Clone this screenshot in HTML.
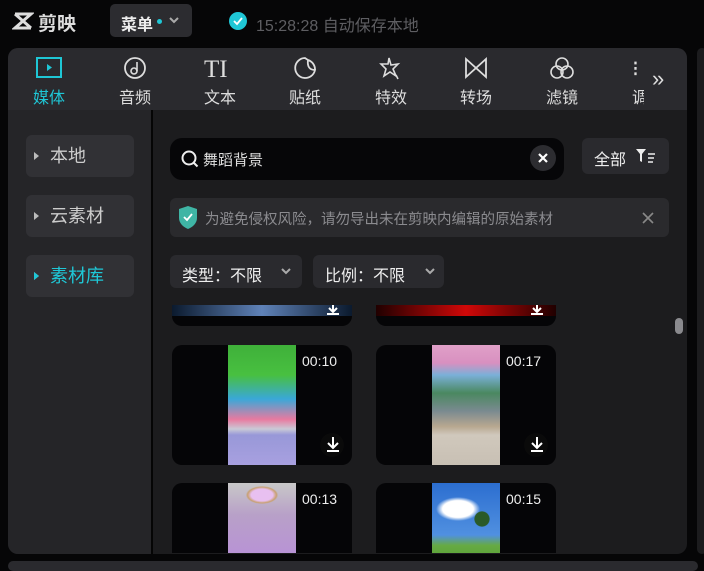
<!DOCTYPE html>
<html><head><meta charset="utf-8"><style>
*{margin:0;padding:0;box-sizing:border-box}
body{width:704px;height:569px;background:#060607;overflow:hidden;position:relative;font-family:"Liberation Sans","Noto Sans CJK SC",sans-serif;color:#ddd}
.a{position:absolute}
.tab{position:absolute;top:56px;width:60px;text-align:center;font-size:16px;color:#ddd}
.tab svg{display:block;margin:0 auto 4px}
.side{position:absolute;left:26px;width:108px;height:42px;background:#313135;border-radius:6px;font-size:18px;color:#ccc;line-height:42px;padding-left:24px}
.side:before{content:"";position:absolute;left:8px;top:17px;border-left:5px solid #bbb;border-top:4px solid transparent;border-bottom:4px solid transparent}
.card{position:absolute;width:180px;background:#050507;border-radius:10px;overflow:hidden}
.img{position:absolute;left:56px;top:0;width:68px;height:100%}
.dur{position:absolute;left:130px;top:8px;font-size:14px;color:#eee}
.dl{position:absolute;left:148px;width:24px;height:24px;border-radius:12px;background:#0a0a0a}
</style></head><body>
<svg class="a" style="left:12px;top:11px" width="22" height="20" viewBox="0 0 22 20"><path d="M3 3h16L3 17h16M3 3l16 14" stroke="#ddd" stroke-width="3" fill="none"/></svg>
<div class="a" style="left:38px;top:9px;font-size:19px;font-weight:bold;color:#ddd">剪映</div>
<div class="a" style="left:110px;top:4px;width:82px;height:33px;background:#2c2c30;border-radius:5px"></div>
<div class="a" style="left:121px;top:11px;font-size:16px;font-weight:bold;color:#eee">菜单</div>
<div class="a" style="left:157px;top:19px;width:5px;height:5px;border-radius:3px;background:#1fc7d6"></div>
<svg class="a" style="left:168px;top:15px" width="12" height="10"><path d="M2 3l4 4 4-4" stroke="#aaa" stroke-width="2" fill="none"/></svg>
<div class="a" style="left:229px;top:12px;width:18px;height:18px;border-radius:9px;background:#1fc7d6"></div>
<svg class="a" style="left:229px;top:12px" width="18" height="18"><path d="M5 9l3 3 5-6" stroke="#fff" stroke-width="1.8" fill="none"/></svg>
<div class="a" style="left:256px;top:12px;font-size:16px;color:#5e5e62">15:28:28 自动保存本地</div>
<div class="a" style="left:8px;top:48px;width:679px;height:506px;background:#1c1c1e;border-radius:10px;overflow:hidden">
 <div class="a" style="left:0;top:0;width:679px;height:62px;background:#2a2a2e"></div>
 <div class="a" style="left:0;top:62px;width:143px;height:450px;background:#252528"></div>
 <div class="a" style="left:143px;top:62px;width:2px;height:450px;background:#050505"></div>
</div>
<div class="a" style="left:697px;top:48px;width:10px;height:506px;background:#1c1c1e;border-radius:8px"></div>
<div class="a" style="left:8px;top:561px;width:690px;height:10px;background:#2a2a2e;border-radius:6px"></div>
<div class="tab" style="left:19px;color:#1fc7d6"><svg width="30" height="24"><rect x="3" y="2" width="24" height="19" stroke="#1fc7d6" stroke-width="2" fill="none"/><path d="M13 8v7l5-3.5z" fill="#1fc7d6"/></svg>媒体</div>
<div class="tab" style="left:105px"><svg width="30" height="24"><circle cx="15" cy="12" r="10" stroke="#ddd" stroke-width="1.8" fill="none"/><circle cx="14" cy="15" r="3" stroke="#ddd" stroke-width="1.6" fill="none"/><path d="M17 15V6" stroke="#ddd" stroke-width="1.6"/></svg>音频</div>
<div class="tab" style="left:190px"><svg width="36" height="24"><text x="2" y="21" font-family="Liberation Serif" font-size="25" fill="#ddd">TI</text></svg>文本</div>
<div class="tab" style="left:275px"><svg width="30" height="24"><path d="M15 2a10 10 0 1 0 10 12c-5 0-8-3-7-10z M18 4a10 10 0 0 1 7 10" stroke="#ddd" stroke-width="1.8" fill="none"/></svg>贴纸</div>
<div class="tab" style="left:361px"><svg width="30" height="24"><path d="M13 2l2 7 7-1-5 5 3 7-6-4-6 4 2-7-5-5 7 0z M20 19l2 4" stroke="#ddd" stroke-width="1.6" fill="none"/></svg>特效</div>
<div class="tab" style="left:446px"><svg width="30" height="24"><path d="M5 3v18l20-18v18z" stroke="#ddd" stroke-width="1.8" fill="none"/></svg>转场</div>
<div class="tab" style="left:532px"><svg width="30" height="24"><circle cx="15" cy="8" r="6" stroke="#ddd" stroke-width="1.6" fill="none"/><circle cx="10" cy="16" r="6" stroke="#ddd" stroke-width="1.6" fill="none"/><circle cx="20" cy="16" r="6" stroke="#ddd" stroke-width="1.6" fill="none"/></svg>滤镜</div>
<div class="a" style="left:632px;top:56px;width:12px;height:52px;overflow:hidden;font-size:16px;color:#ddd"><div style="height:28px;font-size:22px">⁝</div>调</div>
<div class="a" style="left:652px;top:66px;font-size:22px;color:#ddd">»</div>
<div class="side" style="top:135px">本地</div>
<div class="side" style="top:195px">云素材</div>
<div class="side" style="top:255px;color:#1fc7d6">素材库</div>
<div class="a" style="left:34px;top:272px;border-left:5px solid #1fc7d6;border-top:4px solid transparent;border-bottom:4px solid transparent"></div>
<div class="a" style="left:170px;top:138px;width:394px;height:42px;background:#060608;border-radius:12px"></div>
<svg class="a" style="left:180px;top:149px" width="20" height="20"><circle cx="9" cy="9" r="6.5" stroke="#eee" stroke-width="2" fill="none"/><path d="M13.5 13.5l4 4" stroke="#eee" stroke-width="2"/></svg>
<div class="a" style="left:203px;top:149px;font-size:15px;color:#ddd">舞蹈背景</div>
<div class="a" style="left:530px;top:145px;width:26px;height:26px;border-radius:13px;background:#2c2c30"></div>
<svg class="a" style="left:530px;top:145px" width="26" height="26"><path d="M9 9l8 8M17 9l-8 8" stroke="#fff" stroke-width="2.2"/></svg>
<div class="a" style="left:582px;top:138px;width:87px;height:36px;background:#2a2a2e;border-radius:6px"></div>
<div class="a" style="left:594px;top:146px;font-size:16px;color:#eee">全部</div>
<svg class="a" style="left:634px;top:147px" width="24" height="18"><path d="M2 2h10l-4 5v8l-2-1V7z" fill="#eee"/><path d="M14 7h7M14 11h6M14 15h5" stroke="#eee" stroke-width="1.5"/></svg>
<div class="a" style="left:170px;top:198px;width:499px;height:39px;background:#2a2a2d;border-radius:6px"></div>
<svg class="a" style="left:177px;top:205px" width="22" height="25"><path d="M11 1l9 3v9c0 5-4 9-9 11-5-2-9-6-9-11V4z" fill="#3fb5a5"/><path d="M7 12l3 3 5-6" stroke="#fff" stroke-width="1.8" fill="none"/></svg>
<div class="a" style="left:205px;top:208px;font-size:14.5px;color:#8b8b8f">为避免侵权风险，请勿导出未在剪映内编辑的原始素材</div>
<svg class="a" style="left:640px;top:210px" width="16" height="16"><path d="M3 3l10 10M13 3L3 13" stroke="#888" stroke-width="1.6"/></svg>
<div class="a" style="left:170px;top:255px;width:132px;height:33px;background:#2a2a2e;border-radius:6px"></div>
<div class="a" style="left:182px;top:262px;font-size:16px;color:#eee">类型：不限</div>
<svg class="a" style="left:280px;top:266px" width="12" height="10"><path d="M2 3l4 4 4-4" stroke="#aaa" stroke-width="2" fill="none"/></svg>
<div class="a" style="left:313px;top:255px;width:131px;height:33px;background:#2a2a2e;border-radius:6px"></div>
<div class="a" style="left:325px;top:262px;font-size:16px;color:#eee">比例：不限</div>
<svg class="a" style="left:424px;top:266px" width="12" height="10"><path d="M2 3l4 4 4-4" stroke="#aaa" stroke-width="2" fill="none"/></svg>
<div class="a" style="left:153px;top:305px;width:520px;height:248px;overflow:hidden">
 <div class="card" style="left:19px;top:-20px;height:41px"><div style="position:absolute;left:0;top:0;width:180px;height:31px;background:linear-gradient(90deg,#0b1a2e,#5f82b8 50%,#0b1a2e)"></div></div>
 <div class="card" style="left:223px;top:-20px;height:41px"><div style="position:absolute;left:0;top:0;width:180px;height:31px;background:linear-gradient(90deg,#200000,#d00808 50%,#200000)"></div></div>
 <div class="card" style="left:19px;top:40px;height:120px"><div class="img" style="background:linear-gradient(#3fb03a 0%,#48c040 25%,#3aa8d8 45%,#e87aa0 62%,#c9c9d6 70%,#9898d8 75%,#a8a0e0 100%)"></div><div class="dur">00:10</div><div class="dl" style="top:88px"></div></div>
 <div class="card" style="left:223px;top:40px;height:120px"><div class="img" style="background:linear-gradient(#e0a0c8 0%,#d890c0 15%,#7ab0d8 25%,#4a8860 40%,#7a8a90 55%,#b8a890 68%,#d0c8bc 75%,#c8c0b4 100%)"></div><div class="dur">00:17</div><div class="dl" style="top:88px"></div></div>
 <div class="card" style="left:19px;top:178px;height:80px"><div class="img" style="background:radial-gradient(ellipse 18px 10px at 34px 12px,#e8c0f0 60%,#c8a070 80%,transparent 90%),linear-gradient(#c8c8c8,#b8a0c8 40%,#b890d8)"></div><div class="dur">00:13</div></div>
 <div class="card" style="left:223px;top:178px;height:80px"><div class="img" style="background:radial-gradient(circle 8px at 50px 36px,#2a5a28 90%,transparent),radial-gradient(ellipse 22px 12px at 26px 26px,#fff 70%,transparent),linear-gradient(#2c6ed0 0%,#5090e0 65%,#66aa44 78%,#58a030 100%)"></div><div class="dur">00:15</div></div>
</div>
<svg class="a" style="left:322px;top:305px" width="22" height="12"><path d="M11 0v6M7 3l4 4 4-4M5 9h12" stroke="#fff" stroke-width="2" fill="none"/></svg>
<svg class="a" style="left:526px;top:305px" width="22" height="12"><path d="M11 0v6M7 3l4 4 4-4M5 9h12" stroke="#fff" stroke-width="2" fill="none"/></svg>
<svg class="a" style="left:322px;top:435px" width="22" height="18"><path d="M11 2v10M6 8l5 5 5-5M5 16h12" stroke="#fff" stroke-width="2" fill="none"/></svg>
<svg class="a" style="left:526px;top:435px" width="22" height="18"><path d="M11 2v10M6 8l5 5 5-5M5 16h12" stroke="#fff" stroke-width="2" fill="none"/></svg>
<div class="a" style="left:675px;top:318px;width:8px;height:16px;border-radius:4px;background:#8a8a8e"></div>
</body></html>
